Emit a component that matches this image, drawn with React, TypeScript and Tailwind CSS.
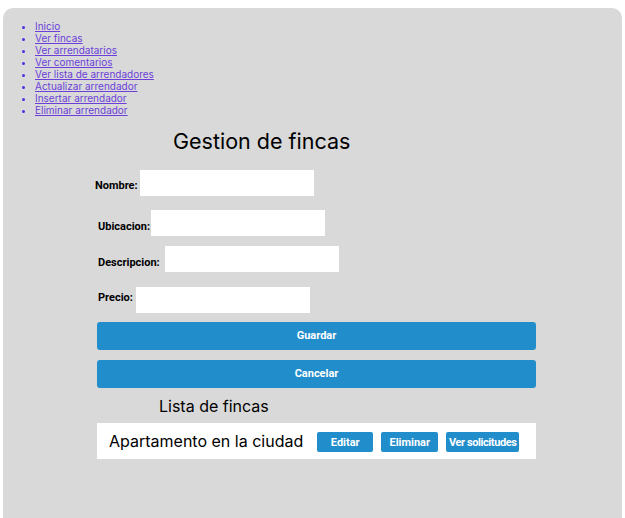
import React from "react";

const links = [
  "Inicio",
  "Ver fincas",
  "Ver arrendatarios",
  "Ver comentarios",
  "Ver lista de arrendadores",
  "Actualizar arrendador",
  "Insertar arrendador",
  "Eliminar arrendador",
];

function Field({ label, pl, mt, gap, lab }: { label: string; pl: string; mt: string; gap: string; lab: string }) {
  return (
    <div className={`flex items-center ${pl} ${mt}`}>
      <span className={`${lab} text-[11px] font-bold text-black`} style={{ fontFamily: "Roboto, 'Liberation Sans', sans-serif" }}>
        {label}
      </span>
      <div className={`${gap} h-[26px] w-[174px] bg-white`} />
    </div>
  );
}

export default function App() {
  return (
    <div className="min-h-[518px] bg-white pt-[8px] pl-[3px]" style={{ fontFamily: "Inter, 'Liberation Sans', sans-serif" }}>
      <div className="w-[619px] min-h-[510px] rounded-t-[10px] bg-[#d9d9d9] pt-[12px]">
        <ul className="list-disc pl-[32px] text-[10px] leading-[12px] text-[#6b3fd8] marker:text-[#4a2fe0]">
          {links.map((l) => (
            <li key={l}>
              <a href="#" className="underline">{l}</a>
            </li>
          ))}
        </ul>
        <h1 className="mt-[10px] pl-[170px] text-[21.5px] leading-[30px] text-black">Gestion de fincas</h1>
        <Field label="Nombre:" pl="pl-[92px]" mt="mt-[14px]" gap="ml-[2px]" lab="mt-[6px]" />
        <Field label="Ubicacion:" pl="pl-[95px]" mt="mt-[14px]" gap="ml-[1px]" lab="mt-[8px]" />
        <Field label="Descripcion:" pl="pl-[95px]" mt="mt-[10px]" gap="ml-[5px]" lab="mt-[8px]" />
        <Field label="Precio:" pl="pl-[95px]" mt="mt-[15px]" gap="ml-[3px]" lab="mb-[4px]" />
        <div className="ml-[94px] mt-[9px] flex w-[439px] flex-col gap-[10px]" style={{ fontFamily: "Roboto, 'Liberation Sans', sans-serif" }}>
          <button className="h-[28px] rounded-[3px] bg-[#228dcb] text-[11px] font-bold text-white">Guardar</button>
          <button className="h-[28px] rounded-[3px] bg-[#228dcb] text-[11px] font-bold text-white">Cancelar</button>
        </div>
        <h2 className="mt-[7px] pl-[156px] text-[16px] leading-[22px] text-black">Lista de fincas</h2>
        <div className="ml-[94px] mt-[6px] flex h-[36px] w-[439px] items-center bg-white pl-[12px]">
          <span className="text-[16px] text-black">Apartamento en la ciudad</span>
          <div className="ml-[14px] flex gap-[8px]" style={{ fontFamily: "Roboto, 'Liberation Sans', sans-serif" }}>
            <button className="mt-[1px] h-[20px] w-[56px] rounded-[2px] bg-[#228dcb] pt-[3px] text-[11px] font-bold text-white">Editar</button>
            <button className="mt-[1px] h-[20px] w-[57px] rounded-[2px] bg-[#228dcb] pt-[3px] text-[11px] font-bold text-white">Eliminar</button>
            <button className="mt-[1px] h-[20px] w-[73px] overflow-visible whitespace-nowrap rounded-[2px] bg-[#228dcb] pt-[3px] text-[11px] font-bold tracking-[-0.4px] text-white">Ver solicitudes</button>
          </div>
        </div>
      </div>
    </div>
  );
}
